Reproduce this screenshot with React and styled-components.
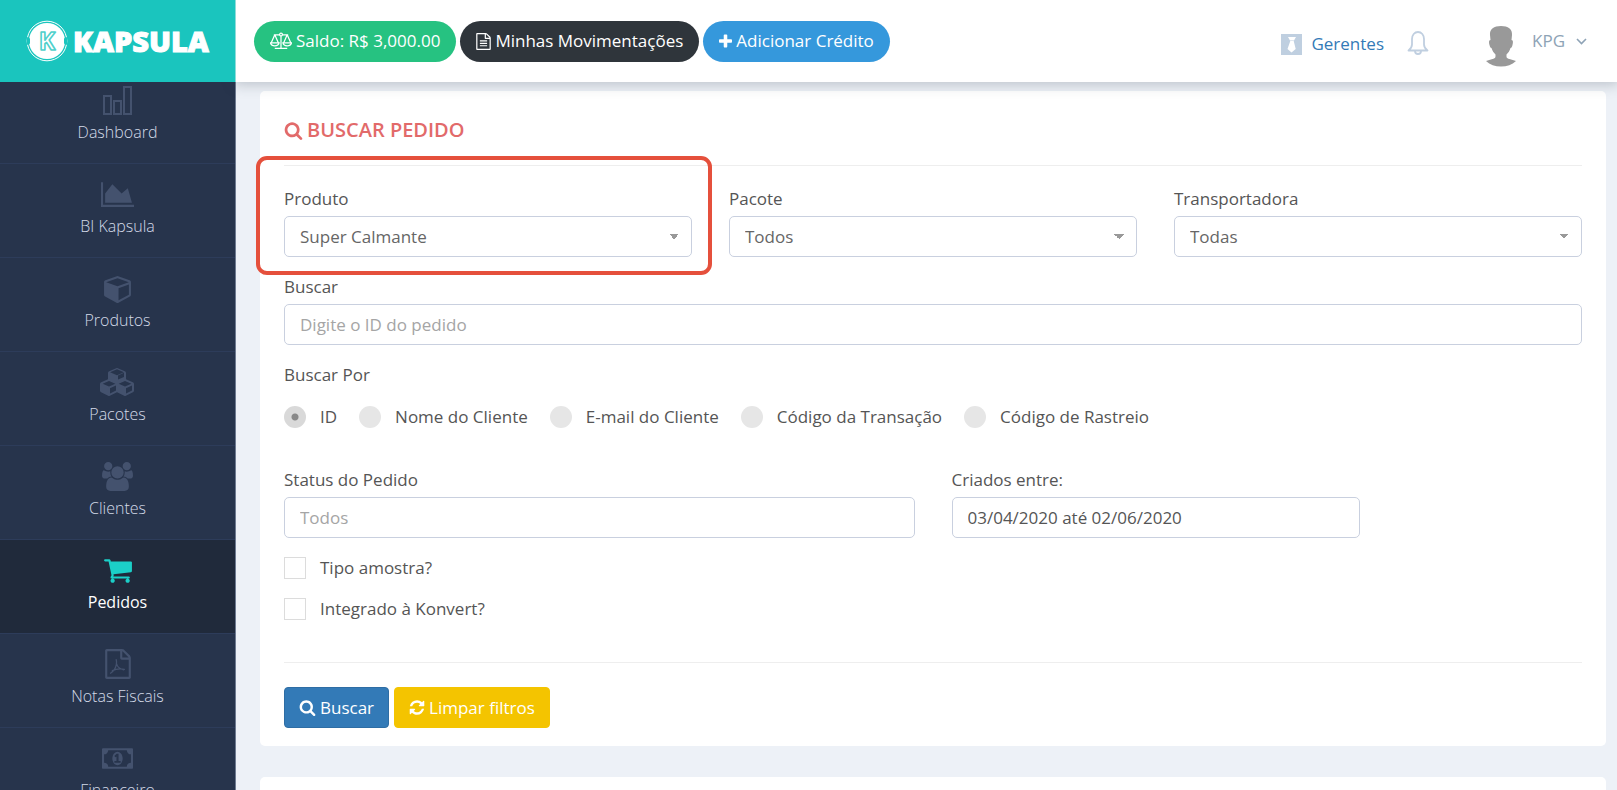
import React, { useState } from 'react'
import styled, { createGlobalStyle, css } from 'styled-components'

const paths = {
    area: "M2048 1536v128h-2048v-1536h128v1408h1920zm-384-1024l256 896h-1664v-576l448-576 576 576z",
    cube: "M896 1629l640-349v-636l-640 233v752zM832 764l698-254-698-254-698 254zM1664 512v768q0 35-18 65t-49 47l-704 384q-28 16-61 16t-61-16l-704-384q-31-17-49-47t-18-65v-768q0-40 23-73t61-50l704-256q22-8 44-8t44 8l704 256q38 17 61 50t23 73z",
    cubes: "M640 1632l384-192v-314l-384 164v342zM576 1178l404-173-404-173-404 173zM1664 1632l384-192v-314l-384 164v342zM1600 1178l404-173-404-173-404 173zM1152 741l384-165v-266l-384 164v267zM1088 462l441-189-441-189-441 189zM2176 1024v416q0 36-19 67t-52 47l-448 224q-25 14-57 14t-57-14l-448-224q-4-2-7-4-2 2-7 4l-448 224q-25 14-57 14t-57-14l-448-224q-33-16-52-47t-19-67v-416q0-38 21.5-70t56.5-48l434-186v-400q0-38 21.5-70t56.5-48l448-192q23-10 50-10t50 10l448 192q35 16 56.5 48t21.5 70v400l434 186q36 16 57 48t21 70z",
    users: "M657 896q-162 5-265 128h-134q-82 0-138-40.5t-56-118.5q0-353 124-353 6 0 43.5 21t97.5 42.5 119 21.5q67 0 133-23-5 37-5 66 0 139 81 256zm1071 637q0 120-73 189.5t-194 69.5h-874q-121 0-194-69.5t-73-189.5q0-53 3.5-103.5t14-109 26.5-108.5 43-97.5 62-81 85.5-53.5 111.5-20q10 0 43 21.5t73 48 107 48 135 21.5 135-21.5 107-48 73-48 43-21.5q61 0 111.5 20t85.5 53.5 62 81 43 97.5 26.5 108.5 14 109 3.5 103.5zm-1024-1277q0 106-75 181t-181 75-181-75-75-181 75-181 181-75 181 75 75 181zm704 384q0 159-112.5 271.5t-271.5 112.5-271.5-112.5-112.5-271.5 112.5-271.5 271.5-112.5 271.5 112.5 112.5 271.5zm576 225q0 78-56 118.5t-138 40.5h-134q-103-123-265-128 81-117 81-256 0-29-5-66 66 23 133 23 59 0 119-21.5t97.5-42.5 43.5-21q124 0 124 353zm-128-609q0 106-75 181t-181 75-181-75-75-181 75-181 181-75 181 75 75 181z",
    cart: "M704 1536q0 52-38 90t-90 38-90-38-38-90 38-90 90-38 90 38 38 90zm896 0q0 52-38 90t-90 38-90-38-38-90 38-90 90-38 90 38 38 90zm128-1088v512q0 24-16.5 42.5t-40.5 21.5l-1044 122q13 60 13 70 0 16-24 64h920q26 0 45 19t19 45-19 45-45 19h-1024q-26 0-45-19t-19-45q0-11 8-31.5t16-36 21.5-40 15.5-29.5l-177-823h-204q-26 0-45-19t-19-45 19-45 45-19h256q16 0 28.5 6.5t19.5 15.5 13 24.5 8 26 5.5 29.5 4.5 26h1201q26 0 45 19t19 45z",
    money: "M768 1152h384v-96h-128v-448h-114l-148 137 77 80q42-37 55-57h2v288h-128v96zm512-256q0 70-21 142t-59.5 134-101.5 101-138 39-138-39-101.5-101-59.5-134-21-142 21-142 59.5-134 101.5-101 138-39 138 39 101.5 101 59.5 134 21 142zm512 256v-512q-106 0-181-75t-75-181h-1152q0 106-75 181t-181 75v512q106 0 181 75t75 181h1152q0-106 75-181t181-75zm128-832v1152q0 26-19 45t-45 19h-1792q-26 0-45-19t-19-45v-1152q0-26 19-45t45-19h1792q26 0 45 19t19 45z",
    search: "M1216 832q0-185-131.5-316.5t-316.5-131.5-316.5 131.5-131.5 316.5 131.5 316.5 316.5 131.5 316.5-131.5 131.5-316.5zm512 832q0 52-38 90t-90 38q-54 0-90-38l-343-342q-179 124-399 124-143 0-273.5-55.5t-225-150-150-225-55.5-273.5 55.5-273.5 150-225 225-150 273.5-55.5 273.5 55.5 225 150 150 225 55.5 273.5q0 220-124 399l343 343q37 37 37 90z",
    refresh: "M1639 1056q0 5-1 7-64 268-268 434.5t-478 166.5q-146 0-282.5-55t-243.5-157l-129 129q-19 19-45 19t-45-19-19-45v-448q0-26 19-45t45-19h448q26 0 45 19t19 45-19 45l-137 137q71 66 161 102t187 36q134 0 250-65t186-179q11-17 53-117 8-23 30-23h192q13 0 22.5 9.5t9.5 22.5zm25-800v448q0 26-19 45t-45 19h-448q-26 0-45-19t-19-45 19-45l138-138q-148-137-349-137-134 0-250 65t-186 179q-11 17-53 117-8 23-30 23h-199q-13 0-22.5-9.5t-9.5-22.5v-7q65-268 270-434.5t480-166.5q146 0 284 55.5t245 156.5l130-129q19-19 45-19t45 19 19 45z",
    file: "M1596 380q28 28 48 76t20 88v1152q0 40-28 68t-68 28h-1344q-40 0-68-28t-28-68v-1600q0-40 28-68t68-28h896q40 0 88 20t76 48zm-444-244v376h376q-10-29-22-41l-313-313q-12-12-41-22zm384 1528v-1024h-416q-40 0-68-28t-28-68v-416h-768v1536h1280z",
    lines: "M512 800q0-14 9-23t23-9h704q14 0 23 9t9 23v64q0 14-9 23t-23 9h-704q-14 0-23-9t-9-23v-64zm736 224q14 0 23 9t9 23v64q0 14-9 23t-23 9h-704q-14 0-23-9t-9-23v-64q0-14 9-23t23-9h704zm0 256q14 0 23 9t9 23v64q0 14-9 23t-23 9h-704q-14 0-23-9t-9-23v-64q0-14 9-23t23-9h704z",
    plus: "M1600 736v192q0 40-28 68t-68 28h-416v416q0 40-28 68t-68 28h-192q-40 0-68-28t-28-68v-416h-416q-40 0-68-28t-28-68v-192q0-40 28-68t68-28h416v-416q0-40 28-68t68-28h192q40 0 68 28t28 68v416h416q40 0 68 28t28 68z",
}

const Glyph = ({ d, x = 0, w = 1792, size = 18 }) => (
    <svg width={Math.round(size * w / 1792)} height={size} viewBox={`${x} 0 ${w} 1792`} fill="currentColor" aria-hidden="true">
        <path d={d} />
    </svg>
)

const BarsIcon = () => (
    <svg width="30" height="30" viewBox="0 0 30 30" fill="none" stroke="currentColor" strokeWidth="2" aria-hidden="true">
        <rect x="1" y="11" width="7" height="18" />
        <rect x="11" y="16" width="7" height="13" />
        <rect x="21" y="2" width="7" height="27" />
    </svg>
)

const PdfIcon = () => (
    <svg width="30" height="30" viewBox="0 0 1792 1792" fill="currentColor" aria-hidden="true">
        <path d={paths.file} />
        <path d="M790 640c40 120 20 220 0 330-40 190-190 380-340 480M800 860c60 220 190 340 440 380M560 1290c180-90 450-130 720-80" fill="none" stroke="currentColor" strokeWidth="75" strokeLinecap="round" />
    </svg>
)

const ScaleIcon = () => (
    <svg width="22" height="18" viewBox="0 0 23 18" fill="none" stroke="currentColor" strokeWidth="1.3" aria-hidden="true">
        <path d="M4 2.5h6M13 2.5h6M11.5 4v12M5 16.7h13M5 2.5L1.2 11M5 2.5L8.8 11M18 2.5L14.2 11M18 2.5L21.8 11" />
        <circle cx="11.5" cy="2.3" r="1.5" />
        <path d="M.5 11h9c-.4 2-2 3-4.5 3S.9 13 .5 11zM13.5 11h9c-.4 2-2 3-4.5 3s-4.1-1-4.5-3z" />
    </svg>
)

const BellIcon = () => (
    <svg width="22" height="24" viewBox="0 0 22 24" fill="none" stroke="currentColor" strokeWidth="1.8" strokeLinejoin="round" aria-hidden="true">
        <path d="M1.5 19.500c2-1.5 3.500-3 3.500-6V8c0-4 2.500-7 6-7s6 3 6 7v5.500c0 3 1.500 4.500 3.500 6z" />
        <path d="M8 20c0 2 1.200 3 3 3s3-1 3-3" />
    </svg>
)

const TieIcon = () => (
    <svg width="21" height="21" viewBox="0 0 21 21" aria-hidden="true">
        <rect width="21" height="21" fill="#bfcfe0" />
        <path d="M7 3h8l-2 3.500h-4zM9.300 7h3.400l2 8-4.200 3.500L6.500 15z" fill="#fff" />
    </svg>
)

const AvatarIcon = () => (
    <svg width="32" height="42" viewBox="0 0 32 42" fill="#999" aria-hidden="true">
        <path d="M16 1C9 1 4.500 4 5 10l.5 5c-2 0-1.500 3-1 5s1 3 2 3c1 3 2 4.500 4 6.500 0 3 .3 3.500-3 4.500L1 36c4 3.700 9 5.500 15 5.500S27 39.700 31 36l-6.500-2c-3.300-1-3-1.500-3-4.500 2-2 3-3.500 4-6.500 1 0 1.500-1 2-3s1-5-1-5l.5-5C27.500 4 23 1 16 1z" />
    </svg>
)

const ChevronIcon = () => (
    <svg width="11" height="7" viewBox="0 0 11 7" fill="none" stroke="currentColor" strokeWidth="1.6" aria-hidden="true">
        <path d="M1 1l4.500 4.500L10 1" />
    </svg>
)

const LogoMark = () => (
    <svg width="42" height="42" viewBox="0 0 42 42" aria-hidden="true">
        <circle cx="21" cy="21" r="19.800" fill="none" stroke="#fff" strokeWidth="1" />
        <circle cx="21" cy="21" r="18" fill="#fff" />
        <path d="M1 17l3 1.500v5L1 25zM41 17l-3 1.500v5l3 1.500z" fill="#1ac5be" />
        <text x="21" y="30" textAnchor="middle" fontFamily="Open Sans, sans-serif" fontSize="25" fontWeight="700" fill="#fff" stroke="#4fd0cb" strokeWidth="1.6" strokeLinejoin="round">K</text>
    </svg>
)

const menu = [
    { label: "Dashboard", icon: <BarsIcon /> },
    { label: "BI Kapsula", icon: <Glyph d={paths.area} w={2048} size={29} /> },
    { label: "Produtos", icon: <Glyph d={paths.cube} x={-64} size={29} /> },
    { label: "Pacotes", icon: <Glyph d={paths.cubes} w={2304} size={28} /> },
    { label: "Clientes", icon: <Glyph d={paths.users} w={2048} size={29} /> },
    { label: "Pedidos", icon: <Glyph d={paths.cart} size={30} />, active: true },
    { label: "Notas Fiscais", icon: <PdfIcon /> },
    { label: "Financeiro", icon: <Glyph d={paths.money} w={1920} size={29} /> },
]

const searchModes = ["ID", "Nome do Cliente", "E-mail do Cliente", "Código da Transação", "Código de Rastreio"]

const App = () => {
    const [mode, setMode] = useState("ID")
    const [dates, setDates] = useState("03/04/2020 até 02/06/2020")

    return (
        <>
            <GlobalStyle />
            <Shell>
                <Brand href="#">
                    <LogoMark />
                    <BrandName>KAPSULA</BrandName>
                </Brand>

                <TopBar>
                    <Pills>
                        <Pill $bg="#26c281"><ScaleIcon />Saldo: R$ 3,000.00</Pill>
                        <Pill $bg="#2f353b"><Glyph d={paths.file + paths.lines} x={128} w={1536} size={17} />Minhas Movimentações</Pill>
                        <Pill $bg="#3598dc"><Glyph d={paths.plus} x={192} w={1408} size={17} />Adicionar Crédito</Pill>
                    </Pills>
                    <UserArea>
                        <Managers href="#"><TieIcon /><span>Gerentes</span></Managers>
                        <BellButton aria-label="Notificações"><BellIcon /></BellButton>
                        <UserButton>
                            <Avatar><AvatarIcon /></Avatar>
                            <span>KPG</span>
                            <ChevronIcon />
                        </UserButton>
                    </UserArea>
                </TopBar>

                <Sidebar>
                    {menu.map(item => (
                        <MenuItem key={item.label} href="#" $active={item.active}>
                            <MenuIcon>{item.icon}</MenuIcon>
                            {item.label}
                        </MenuItem>
                    ))}
                </Sidebar>

                <Main>
                    <Card>
                        <Title><Glyph d={paths.search} size={19} />BUSCAR PEDIDO</Title>
                        <Form onSubmit={e => e.preventDefault()}>
                            <Field $span={4} $marked>
                                <Label htmlFor="produto">Produto</Label>
                                <Select id="produto"><option>Super Calmante</option></Select>
                            </Field>
                            <Field $span={4}>
                                <Label htmlFor="pacote">Pacote</Label>
                                <Select id="pacote"><option>Todos</option></Select>
                            </Field>
                            <Field $span={4}>
                                <Label htmlFor="transportadora">Transportadora</Label>
                                <Select id="transportadora"><option>Todas</option></Select>
                            </Field>
                            <Field $span={12}>
                                <Label htmlFor="buscar">Buscar</Label>
                                <Input id="buscar" placeholder="Digite o ID do pedido" />
                            </Field>
                            <ModeGroup>
                                <Legend>Buscar Por</Legend>
                                <Modes>
                                    {searchModes.map(m => (
                                        <Choice key={m}>
                                            <Radio type="radio" name="modo" checked={mode === m} onChange={() => setMode(m)} />
                                            {m}
                                        </Choice>
                                    ))}
                                </Modes>
                            </ModeGroup>
                            <Field $span={6}>
                                <Label htmlFor="status">Status do Pedido</Label>
                                <Input id="status" placeholder="Todos" />
                            </Field>
                            <Field $span={4}>
                                <Label htmlFor="datas">Criados entre:</Label>
                                <Input id="datas" value={dates} onChange={e => setDates(e.target.value)} />
                            </Field>
                            <Checks>
                                <Choice><Checkbox type="checkbox" />Tipo amostra?</Choice>
                                <Choice><Checkbox type="checkbox" />Integrado à Konvert?</Choice>
                            </Checks>
                            <Actions>
                                <Action type="submit" $bg="#337ab7" $border="#2e6da4"><Glyph d={paths.search} size={17} />Buscar</Action>
                                <Action type="reset" $bg="#f4c400" $border="#f4c400"><Glyph d={paths.refresh} x={64} w={1664} size={17} />Limpar filtros</Action>
                            </Actions>
                        </Form>
                    </Card>
                    <Card />
                </Main>
            </Shell>
        </>
    )
}

export default App

const GlobalStyle = createGlobalStyle`
    * { box-sizing: border-box; }
    body {
        margin: 0;
        font-family: 'Open Sans', sans-serif;
        font-size: 17px;
        line-height: 24px;
        color: #555;
        background-color: #edf1f7;
    }
    button, input, select { font: inherit; }
    a { text-decoration: none; }
    svg { flex: none; display: block; }
`

const Shell = styled.div`
    display: grid;
    grid-template-columns: 236px 1fr;
    grid-template-rows: 82px 1fr;
    height: 100vh;
    overflow: hidden;
`

const Brand = styled.a`
    display: flex;
    align-items: center;
    gap: 5px;
    padding-left: 26px;
    background-color: #1ac5be;
    border-right: 1px solid #8fdcd9;
    z-index: 2;
`

const BrandName = styled.span`
    color: white;
    font-size: 29px;
    font-weight: 800;
    -webkit-text-stroke: 1px white;
`

const TopBar = styled.header`
    display: flex;
    justify-content: space-between;
    align-items: center;
    padding: 0 30px 0 18px;
    background-color: white;
    box-shadow: 0 1px 12px 2px rgba(50, 65, 75, 0.25);
    z-index: 1;
`

const Pills = styled.div`
    display: flex;
    gap: 4px;
`

const Pill = styled.button`
    display: flex;
    align-items: center;
    gap: 4px;
    height: 41px;
    padding: 0 16px;
    border: none;
    border-radius: 21px;
    color: white;
    background-color: ${p => p.$bg};
`

const UserArea = styled.div`
    display: flex;
    align-items: center;
`

const Managers = styled.a`
    display: flex;
    align-items: center;
    gap: 9px;
    padding-top: 6px;
    color: #337ab7;
`

const BellButton = styled.button`
    border: none;
    background: none;
    padding: 4px 0 0;
    margin-left: 23px;
    color: #c0cfe0;
`

const UserButton = styled.button`
    display: flex;
    align-items: center;
    gap: 11px;
    border: none;
    background: none;
    padding: 0;
    margin-left: 56px;
    color: #8ea3b6;
`

const Avatar = styled.span`
    padding-top: 10px;
    margin-right: 4px;
`

// pulled up so that the first item slides under the brand
const Sidebar = styled.nav`
    margin-top: -12px;
    background-color: #27344c;
    border-right: 1px solid #6f7b91;
    overflow: hidden;
`

const MenuItem = styled.a`
    display: flex;
    flex-direction: column;
    align-items: center;
    height: 94px;
    padding-top: 14px;
    gap: 4px;
    font-size: 16px;
    font-weight: 300;
    color: #d3dae8;
    border-bottom: 1px solid #2d3c5a;
    ${p => p.$active && css`
        color: white;
        font-weight: 400;
        background-color: #202a3b;
        svg { color: #1bcfc8; }
    `}
`

const MenuIcon = styled.span`
    display: flex;
    align-items: center;
    height: 32px;
    color: #44526e;
`

const Main = styled.main`
    display: flex;
    flex-direction: column;
    gap: 31px;
    padding: 9px 11px 0 24px;
    overflow: hidden;
`

const Card = styled.section`
    flex: none;
    min-height: 100px;
    padding: 18px 24px;
    background-color: white;
    border-radius: 5px;
`

const Title = styled.h1`
    display: flex;
    align-items: center;
    gap: 4px;
    margin: 0 0 21px;
    padding: 8px 0 22px;
    font-size: 20px;
    font-weight: 600;
    color: #e26a6a;
    line-height: 26px;
    border-bottom: 1px solid #eee;
`

const Form = styled.form`
    display: grid;
    grid-template-columns: repeat(12, 1fr);
    gap: 18px 37px;
`

const Field = styled.div`
    grid-column: span ${p => p.$span};
    ${p => p.$marked && css`
        position: relative;
        &::after {
            content: '';
            position: absolute;
            inset: -31px -20px -18px -28px;
            border: 4px solid #e5503c;
            border-radius: 11px;
            pointer-events: none;
        }
    `}
`

const Label = styled.label`
    display: block;
    margin-bottom: 5px;
`

const control = css`
    display: block;
    width: 100%;
    height: 41px;
    padding: 0 15px;
    color: #555;
    background-color: white;
    border: 1px solid #c9d0df;
    border-radius: 5px;
`

const Input = styled.input`
    ${control}
    &::placeholder { color: #a5a5a5; }
`

const Select = styled.select`
    ${control}
    appearance: none;
    color: #666;
    background-image: linear-gradient(to bottom right, #999 50%, transparent 50%), linear-gradient(to bottom left, #999 50%, transparent 50%);
    background-size: 5px 5px;
    background-position: right 12px center, right 17px center;
    background-repeat: no-repeat;
`

const ModeGroup = styled.fieldset`
    grid-column: span 12;
    margin: 0 0 21px;
    padding: 0;
    border: none;
`

const Legend = styled.legend`
    padding: 0;
    margin-bottom: 18px;
`

const Modes = styled.div`
    display: flex;
    gap: 22px;
`

const Choice = styled.label`
    display: flex;
    align-items: center;
    gap: 14px;
`

const Radio = styled.input`
    appearance: none;
    width: 22px;
    height: 22px;
    margin: 0;
    border-radius: 50%;
    background-color: #e6e6e6;
    &:checked {
        background: radial-gradient(circle, #888 3px, #d9d9d9 4px);
    }
`

const Checks = styled.div`
    grid-column: span 12;
    display: flex;
    flex-direction: column;
    align-items: flex-start;
    gap: 17px;
`

const Checkbox = styled.input`
    appearance: none;
    width: 22px;
    height: 22px;
    margin: 0;
    border: 1px solid #dcdcdc;
    background-color: white;
    &:checked { background-color: #999; }
`

const Actions = styled.div`
    grid-column: span 12;
    display: flex;
    gap: 5px;
    margin-top: 23px;
    padding-top: 24px;
    border-top: 1px solid #eee;
`

const Action = styled.button`
    display: flex;
    align-items: center;
    gap: 4px;
    height: 41px;
    padding: 0 14px;
    color: white;
    border: 1px solid ${p => p.$border};
    border-radius: 4px;
    background-color: ${p => p.$bg};
`
